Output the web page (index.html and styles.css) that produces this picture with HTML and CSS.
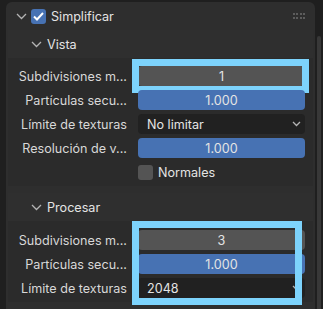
FILE: index.html
```html
<!DOCTYPE html>
<html lang="es">
<head>
    <meta charset="UTF-8">
    <meta name="viewport" content="width=device-width, initial-scale=1.0">
    <title>Simplificar</title>
    <link rel="stylesheet" href="styles.css">
</head>
<body>
    <div class="scrollbar"></div>

    <div class="panel">
        <div class="panel-head">
            <svg class="chevron" width="11" height="7" viewBox="0 0 11 7"><polyline points="1,1 5.5,5.5 10,1"/></svg>
            <span class="check on">
                <svg width="11" height="9" viewBox="0 0 11 9"><polyline points="1,4.5 4,7.5 10,1"/></svg>
            </span>
            <span class="panel-title">Simplificar</span>
            <span class="grip">
                <i></i><i></i><i></i><i></i>
                <i></i><i></i><i></i><i></i>
            </span>
        </div>

        <!-- Vista -->
        <div class="sub">
            <div class="sub-head">
                <svg class="chevron" width="11" height="7" viewBox="0 0 11 7"><polyline points="1,1 5.5,5.5 10,1"/></svg>
                <span>Vista</span>
            </div>
            <div class="sub-body">
                <div class="row">
                    <label>Subdivisiones m...</label>
                    <div class="field num hl">1</div>
                </div>
                <div class="row">
                    <label>Partículas secu...</label>
                    <div class="field slider">1.000</div>
                </div>
                <div class="row">
                    <label>Límite de texturas</label>
                    <div class="field menu">No limitar
                        <svg width="9" height="6" viewBox="0 0 9 6"><polyline points="1,1 4.5,4.5 8,1"/></svg>
                    </div>
                </div>
                <div class="row">
                    <label>Resolución de v...</label>
                    <div class="field slider">1.000</div>
                </div>
                <div class="row">
                    <label></label>
                    <div class="toggle"><span class="check"></span>Normales</div>
                </div>
            </div>
        </div>

        <!-- Procesar -->
        <div class="sub">
            <div class="sub-head">
                <svg class="chevron" width="11" height="7" viewBox="0 0 11 7"><polyline points="1,1 5.5,5.5 10,1"/></svg>
                <span>Procesar</span>
            </div>
            <div class="sub-body">
                <div class="hl-group">
                    <div class="row">
                        <label>Subdivisiones m...</label>
                        <div class="field num">3</div>
                    </div>
                    <div class="row">
                        <label>Partículas secu...</label>
                        <div class="field slider">1.000</div>
                    </div>
                    <div class="row">
                        <label>Límite de texturas</label>
                        <div class="field menu">2048
                            <svg width="9" height="6" viewBox="0 0 9 6"><polyline points="1,1 4.5,4.5 8,1"/></svg>
                        </div>
                    </div>
                </div>
            </div>
        </div>
    </div>
</body>
</html>
```

FILE: styles.css
```css
/* Blender properties panel */
body {
    margin: 0;
    height: 309px;
    overflow: hidden;
    background-color: #1f1f1f;
    font-family: Inter, "Noto Sans", sans-serif;
    font-size: 12.6px;
    color: #e4e4e4;
    position: relative;
}
.scrollbar {
    position: absolute;
    left: 317px;
    top: 36px;
    width: 4px;
    height: 280px;
    border-radius: 2px;
    background-color: #383838;
}
.panel {
    margin: 2px 0 0 6px;
    width: 305px;
    padding: 0 2px;
    background-color: #2e2e2e;
    border-radius: 6px 6px 0 0;
    height: 320px;
}
.panel-head {
    height: 28px;
    display: flex;
    align-items: center;
    padding-left: 8px;
}
.chevron polyline, .menu polyline {
    fill: none;
    stroke: #b4b4b4;
    stroke-width: 1.3;
}
.check {
    width: 15px;
    height: 15px;
    border-radius: 3px;
    background-color: #545454;
    display: inline-flex;
    align-items: center;
    justify-content: center;
    flex-shrink: 0;
}
.check.on {
    background-color: #4772b3;
    margin-left: 4px;
}
.check polyline {
    fill: none;
    stroke: #fff;
    stroke-width: 2;
}
.panel-title {
    margin-left: 5px;
    flex: 1;
}
.grip {
    display: grid;
    grid-template-columns: repeat(4, 2px);
    gap: 2px 1.5px;
    margin-right: 8px;
}
.grip i {
    width: 2px;
    height: 2px;
    background-color: #5c5c5c;
}
.sub-head {
    height: 28px;
    display: flex;
    align-items: center;
    gap: 5px;
    padding-left: 23px;
    background-color: #2f2f2f;
}
.sub-body {
    background-color: #2b2b2b;
    padding: 8px 8px 4px 0;
}
.sub + .sub {
    margin-top: 7px;
}
.sub + .sub .sub-body {
    padding-top: 9px;
}
.row {
    display: grid;
    grid-template-columns: 119px 1fr;
    column-gap: 11px;
    height: 20px;
    margin-bottom: 4px;
    align-items: center;
}
.row:last-child {
    margin-bottom: 0;
}
.row label {
    text-align: right;
    color: #d8d8d8;
    white-space: nowrap;
}
.field {
    height: 20px;
    border-radius: 4px;
    display: flex;
    align-items: center;
    justify-content: center;
    position: relative;
}
.num {
    background-color: #545454;
}
.slider {
    background-color: #4772b3;
}
.menu {
    background-color: #212121;
    justify-content: space-between;
    padding: 0 4px 0 9px;
}
.toggle {
    display: flex;
    align-items: center;
    gap: 5px;
}
/* cyan highlight frames */
.hl::after {
    content: "";
    position: absolute;
    top: -7px;
    bottom: -7px;
    left: -6px;
    right: -4px;
    border: 7px solid #7dd3fc;
}
.hl-group {
    position: relative;
}
.hl-group::after {
    content: "";
    position: absolute;
    top: -9px;
    bottom: -7px;
    left: 124px;
    right: 3px;
    border: 7px solid #7dd3fc;
}
```
